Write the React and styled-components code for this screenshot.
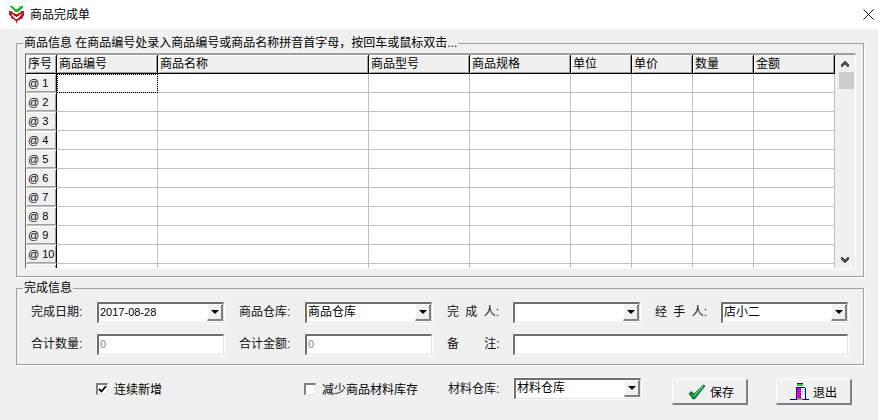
import React from 'react';
import styled, { createGlobalStyle } from 'styled-components';

const GlobalStyle = createGlobalStyle`
  html, body {
    margin: 0;
    padding: 0;
    background: #f0f0f0;
  }
  body {
    font-family: "Liberation Sans", "Noto Sans CJK SC", sans-serif;
    font-size: 12px;
    color: #000;
  }
`;

const Window = styled.div`
  width: 878px;
  height: 420px;
  overflow: hidden;
  background: #f0f0f0;
`;

const TitleBar = styled.div`
  height: 29px;
  background: #fff;
  display: flex;
  align-items: center;
  padding: 0 4px 0 9px;
  box-sizing: border-box;
`;

const TitleText = styled.span`
  margin-left: 6px;
  flex: 1;
  font-size: 12px;
  line-height: 14px;
`;

const Content = styled.div`
  padding: 7px 14px 0 16px;
`;

const Group = styled.fieldset`
  margin: 0 0 4px;
  padding: 0;
  width: 848px;
  box-sizing: border-box;
  border: 1px solid #a0a0a0;
  box-shadow: 1px 1px 0 #fff;
  min-inline-size: 0;
`;

const GroupTitle = styled.legend`
  margin-left: 6px;
  padding: 0 1px;
  line-height: 14px;
  font-size: 12px;
`;

const GroupBody = styled.div`
  padding: ${p => p.$padding};
`;

const GridFrame = styled.div`
  display: flex;
  height: 216px;
  width: 831px;
  box-sizing: border-box;
  border-top: 2px solid #a0a0a0;
  border-left: 1px solid #696969;
  border-right: 1px solid #fff;
  border-bottom: 1px solid #fff;
`;

const Sheet = styled.div`
  display: grid;
  grid-template-columns: 31px 101px 211px 101px 101px 61px 61px 61px 81px;
  grid-auto-rows: 19px;
  width: 809px;
  overflow: hidden;
  background: #fff;
`;

const HeadCell = styled.div`
  box-sizing: border-box;
  background: #f0f0f0;
  border-right: 1px solid #000;
  border-bottom: 1px solid #000;
  box-shadow: inset 1px 1px 0 #fff, inset -1px -1px 0 #a0a0a0;
  padding-left: 2px;
  line-height: 18px;
  white-space: nowrap;
`;

const RowHead = styled.div`
  box-sizing: border-box;
  background: #f0f0f0;
  border-right: 1px solid #000;
  border-bottom: 1px solid #c0c0c0;
  box-shadow: inset 1px 1px 0 #fff, inset -1px -1px 0 #a0a0a0;
  padding-left: 2px;
  font-size: 11px;
  line-height: 18px;
  color: #000;
  white-space: nowrap;
`;

const Cell = styled.div`
  box-sizing: border-box;
  border-right: 1px solid #c0c0c0;
  border-bottom: 1px solid #c0c0c0;
  ${p => p.$focused && 'outline: 1px dotted #000; outline-offset: -1px;'}
`;

const ScrollBar = styled.div`
  width: 20px;
  background: #f0f0f0;
  display: flex;
  flex-direction: column;
  align-items: center;
`;

const ScrollBtn = styled.div`
  height: 17px;
  display: flex;
  align-items: center;
  justify-content: center;
  flex: none;
`;

const ScrollTrack = styled.div`
  flex: 1;
  width: 100%;
`;

const ScrollThumb = styled.div`
  width: 15px;
  height: 17px;
  margin-left: 4px;
  background: #cdcdcd;
`;

const FieldGrid = styled.div`
  display: grid;
  grid-template-columns: repeat(4, 194px);
  column-gap: 14px;
  row-gap: 10px;
  grid-auto-rows: 22px;
`;

const Field = styled.div`
  display: flex;
  align-items: center;
  ${p => p.$span && `grid-column: span ${p.$span};`}
`;

const Label = styled.label`
  width: 66px;
  flex: none;
  white-space: pre;
  word-spacing: 3px;
  line-height: 14px;
  color: #111;
`;

const Sunken = styled.div`
  position: relative;
  width: ${p => p.$width || 127}px;
  height: 21px;
  flex: none;
  box-sizing: border-box;
  background: #fff;
  border-top: 2px solid #6f6f6f;
  border-left: 2px solid #6f6f6f;
  border-right: 1px solid #e3e3e3;
  border-bottom: 1px solid #e3e3e3;
  box-shadow: 1px 1px 0 #fff, -1px -1px 0 #f8f8f8;
  padding-left: 1px;
  line-height: 17px;
  white-space: nowrap;
  color: ${p => (p.$muted ? '#7d8596' : '#000')};
  font-size: ${p => (p.$latin ? 11 : 12)}px;
`;

const DropBtn = styled.div`
  position: absolute;
  top: 0;
  right: 0;
  width: 16px;
  height: 17px;
  box-sizing: border-box;
  background: #f0f0f0;
  border-top: 1px solid #fff;
  border-left: 1px solid #fff;
  border-right: 2px solid #808080;
  border-bottom: 2px solid #808080;
  display: flex;
  align-items: center;
  justify-content: center;
`;

const DropArrow = styled.span`
  width: 0;
  height: 0;
  border-left: 4px solid transparent;
  border-right: 4px solid transparent;
  border-top: 4px solid #000;
`;

const ActionRow = styled.div`
  display: flex;
  align-items: flex-start;
  margin-top: 13px;
  padding-left: 80px;
`;

const CheckItem = styled.div`
  display: flex;
  align-items: center;
  width: ${p => p.$width}px;
  height: 21px;
  flex: none;
`;

const CheckBox = styled.span`
  width: 12px;
  height: 12px;
  flex: none;
  box-sizing: border-box;
  background: #fff;
  border-top: 2px solid #808080;
  border-left: 2px solid #808080;
  border-right: 1px solid #e3e3e3;
  border-bottom: 1px solid #e3e3e3;
  margin-right: 6px;
  display: flex;
  align-items: center;
  justify-content: center;
`;

const Button = styled.button`
  width: 76px;
  height: 26px;
  margin: 1px 0 0 ${p => p.$gap}px;
  flex: none;
  box-sizing: border-box;
  padding: 0 0 0 ${p => p.$indent}px;
  background: #f0f0f0;
  border-top: 1px solid #fff;
  border-left: 1px solid #fff;
  border-right: 2px solid #808080;
  border-bottom: 2px solid #808080;
  font: inherit;
  color: #000;
  display: flex;
  align-items: center;
  gap: 4px;
`;

const COLUMNS = ['序号', '商品编号', '商品名称', '商品型号', '商品规格', '单位', '单价', '数量', '金额'];
const ROW_COUNT = 11;

const Logo = () => (
  <svg width="15" height="17" viewBox="0 0 15 17" shapeRendering="crispEdges">
    <path d="M1 0h3v1h1v1h1v1h3V2h1V1h1V0h3v2h-1v1h-1v1h-1v1h-1v1H6V5H5V4H4V3H3V2H2V1H1z" fill="#12c628" />
    <path d="M0 5h3v1h1v1h2v1h3V7h2V6h1V5h3v5h-1v2h-1v1h-2v1H9v1H8v2H7v-2H6v-1H5v-1H3v-1H2v-2H1v-1H0z" fill="#e0101c" />
    <path d="M3 8h1v1h1v1h2v1h1v-1h2V9h1V8h1v2h-1v1h-1v1H9v1H6v-1H5v-1H4v-1H3z" fill="#fff" />
    <path d="M6 9h3v1H8v1H7v-1H6z" fill="#8a0c14" />
  </svg>
);

const CloseIcon = () => (
  <svg width="11" height="11" viewBox="0 0 11 11">
    <path d="M.5.5l10 10M10.5.5l-10 10" stroke="#111" strokeWidth="1" fill="none" />
  </svg>
);

const Chevron = ({ down }) => (
  <svg width="8" height="6" viewBox="0 0 8 6" shapeRendering="crispEdges">
    <path
      d={down ? 'M0 0h2v1h1v1h2V1h1V0h2v3H7v1H6v1H5v1H3V5H2V4H1V3H0z' : 'M3 0h2v1h1v1h1v1h1v3H6V5H5V4H3v1H2v1H0V3h1V2h1V1h1z'}
      fill="#505050"
    />
  </svg>
);

const CheckMark = () => (
  <svg width="9" height="8" viewBox="0 0 9 8">
    <path d="M1 4l2.5 2.5L8 1" stroke="#000" strokeWidth="1.8" fill="none" />
  </svg>
);

const SaveIcon = () => (
  <svg width="18" height="16" viewBox="0 0 18 16">
    <path d="M1 9.5L3.5 7.5L6 10L15.5 1L17 2L6.5 15H5z" fill="#0b9a1e" stroke="#063a78" strokeWidth="0.8" />
    <path d="M5.5 12L15 2.5" stroke="#3fdc4c" strokeWidth="1.2" />
  </svg>
);

const ExitIcon = () => (
  <svg width="19" height="18" viewBox="0 0 19 18" shapeRendering="crispEdges">
    <defs>
      <pattern id="magentaDots" width="2" height="2" patternUnits="userSpaceOnUse">
        <rect width="2" height="2" fill="#ff00e0" />
        <rect width="1" height="1" fill="#600070" />
      </pattern>
      <pattern id="cyanDots" width="2" height="2" patternUnits="userSpaceOnUse">
        <rect width="2" height="2" fill="#fff" />
        <rect width="1" height="1" fill="#40e0e0" />
      </pattern>
    </defs>
    <rect x="7" y="0" width="6" height="1" fill="#003000" />
    <rect x="7" y="1" width="6" height="2" fill="#10e020" />
    <rect x="6" y="4" width="9" height="1" fill="#000080" />
    <rect x="6" y="5" width="5" height="11" fill="url(#magentaDots)" />
    <rect x="6" y="5" width="1" height="11" fill="#000080" />
    <rect x="11" y="5" width="5" height="7" fill="url(#cyanDots)" />
    <rect x="11" y="12" width="5" height="4" fill="#fff" />
    <rect x="15" y="5" width="1" height="11" fill="#000080" />
    <rect x="0" y="16" width="7" height="1" fill="#000080" />
    <rect x="7" y="15" width="6" height="2" fill="#9a9a9a" />
    <rect x="13" y="16" width="6" height="1" fill="#000080" />
  </svg>
);

const Combo = ({ value, latin }) => (
  <Sunken $latin={latin}>
    {value}
    <DropBtn><DropArrow /></DropBtn>
  </Sunken>
);

const App = () => (
  <Window>
    <GlobalStyle />
    <TitleBar>
      <Logo />
      <TitleText>商品完成单</TitleText>
      <CloseIcon />
    </TitleBar>
    <Content>
      <Group>
        <GroupTitle>商品信息 在商品编号处录入商品编号或商品名称拼音首字母，按回车或鼠标双击...</GroupTitle>
        <GroupBody $padding="3px 7px 7px 8px">
          <GridFrame>
            <Sheet>
              {COLUMNS.map(name => <HeadCell key={name}>{name}</HeadCell>)}
              {Array.from({ length: ROW_COUNT }, (_, row) => (
                <React.Fragment key={row}>
                  <RowHead>{row < 10 ? `@ ${row + 1}` : ''}</RowHead>
                  {COLUMNS.slice(1).map((name, col) => (
                    <Cell key={name} $focused={row === 0 && col === 0} />
                  ))}
                </React.Fragment>
              ))}
            </Sheet>
            <ScrollBar>
              <ScrollBtn><Chevron /></ScrollBtn>
              <ScrollTrack><ScrollThumb /></ScrollTrack>
              <ScrollBtn><Chevron down /></ScrollBtn>
            </ScrollBar>
          </GridFrame>
        </GroupBody>
      </Group>
      <Group>
        <GroupTitle>完成信息</GroupTitle>
        <GroupBody $padding="6px 14px 9px 14px">
          <FieldGrid>
            <Field><Label>完成日期:</Label><Combo value="2017-08-28" latin /></Field>
            <Field><Label>商品仓库:</Label><Combo value="商品仓库" /></Field>
            <Field><Label>完 成 人:</Label><Combo value="" /></Field>
            <Field><Label>经 手 人:</Label><Combo value="店小二" /></Field>
            <Field><Label>合计数量:</Label><Sunken $muted $latin>0</Sunken></Field>
            <Field><Label>合计金额:</Label><Sunken $muted $latin>0</Sunken></Field>
            <Field $span={2}><Label>备    注:</Label><Sunken $width={335} /></Field>
          </FieldGrid>
        </GroupBody>
      </Group>
      <ActionRow>
        <CheckItem $width={208}>
          <CheckBox><CheckMark /></CheckBox>
          连续新增
        </CheckItem>
        <CheckItem $width={144}>
          <CheckBox />
          减少商品材料库存
        </CheckItem>
        <Field>
          <Label>材料仓库:</Label>
          <Combo value="材料仓库" />
        </Field>
        <Button $gap={31} $indent={15}><SaveIcon />保存</Button>
        <Button $gap={28} $indent={13}><ExitIcon />退出</Button>
      </ActionRow>
    </Content>
  </Window>
);

export default App;
